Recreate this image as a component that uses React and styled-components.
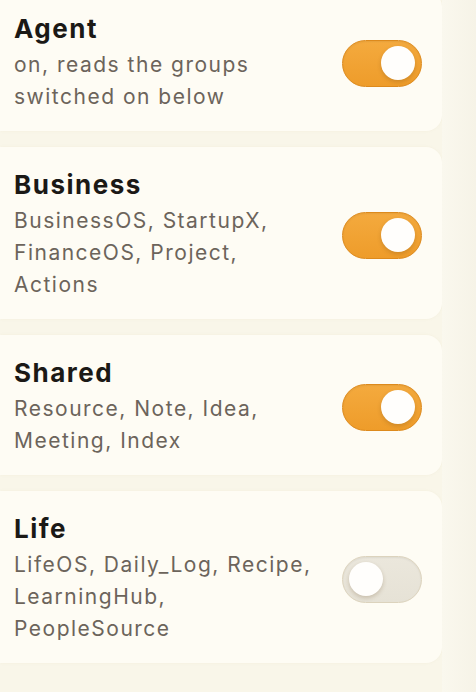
import React, { useState } from "react";
import styled, { createGlobalStyle } from "styled-components";

const GlobalStyle = createGlobalStyle`
  html, body {
    margin: 0;
    padding: 0;
    background: #f9f6e9;
    overflow: hidden;
  }
  * {
    box-sizing: border-box;
  }
`;

const Page = styled.div`
  display: flex;
  width: 476px;
  height: 692px;
  overflow: hidden;
  background: #f9f6e9;
  font-family: "Inter", "DejaVu Sans", sans-serif;
`;

const List = styled.div`
  display: flex;
  flex-direction: column;
  gap: 16px;
  width: 442px;
  margin-top: -9px;
`;

const Edge = styled.div`
  flex: 1;
  background: linear-gradient(to right, #faf8ee, #f6f3e7);
`;

const Card = styled.div`
  display: flex;
  align-items: center;
  gap: 26px;
  padding: 22px 20px 18px 14px;
  background: #fefcf4;
  border-radius: 0 16px 16px 0;
  box-shadow: 0 0 3px rgba(200, 185, 140, 0.1);
`;

const Text = styled.div`
  flex: 1;
  min-width: 0;
`;

const Title = styled.div`
  font-size: 26px;
  line-height: 32px;
  font-weight: 700;
  color: #1b1916;
  letter-spacing: 1.5px;
`;

const Desc = styled.div`
  margin-top: 4px;
  font-size: 21px;
  line-height: 32px;
  color: #6c645b;
  letter-spacing: 1.5px;
`;

const Switch = styled.button`
  position: relative;
  flex: none;
  width: 80px;
  height: 47px;
  padding: 0;
  border-radius: 24px;
  cursor: pointer;
  border: 1px solid ${p => (p.on ? "#dd8a1c" : "#dcd3bd")};
  background: ${p =>
    p.on
      ? "linear-gradient(to bottom, #f4aa3e, #ee9c2a)"
      : "linear-gradient(to bottom, #ebe7dc, #e6e2d6)"};
  box-shadow: inset 0 1px 2px rgba(0, 0, 0, 0.06);
`;

const Knob = styled.span`
  position: absolute;
  top: 5px;
  left: ${p => (p.on ? "38px" : "6px")};
  width: 34px;
  height: 34px;
  border-radius: 50%;
  background: #fffefc;
  box-shadow: 0 2px 4px rgba(90, 60, 20, 0.22);
`;

const groups = [
  { title: "Agent", desc: "on, reads the groups switched on below", on: true },
  {
    title: "Business",
    desc: "BusinessOS, StartupX, FinanceOS, Project, Actions",
    on: true
  },
  { title: "Shared", desc: "Resource, Note, Idea, Meeting, Index", on: true },
  {
    title: "Life",
    desc: "LifeOS, Daily_Log, Recipe, LearningHub, PeopleSource",
    on: false
  }
];

const App = () => {
  const [state, setState] = useState(groups.map(g => g.on));

  const toggle = i => {
    setState(prev => prev.map((v, j) => (j === i ? !v : v)));
  };

  return (
    <>
      <GlobalStyle />
      <Page>
        <List>
          {groups.map((g, i) => (
            <Card key={g.title}>
              <Text>
                <Title>{g.title}</Title>
                <Desc>{g.desc}</Desc>
              </Text>
              <Switch on={state[i]} onClick={() => toggle(i)}>
                <Knob on={state[i]} />
              </Switch>
            </Card>
          ))}
        </List>
        <Edge />
      </Page>
    </>
  );
};

export default App;
